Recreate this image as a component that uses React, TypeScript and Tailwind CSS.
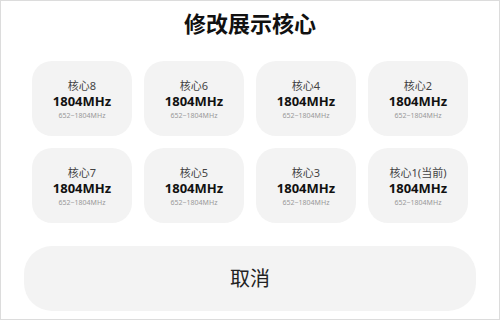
const cores = [
  { name: "核心8" },
  { name: "核心6" },
  { name: "核心4" },
  { name: "核心2" },
  { name: "核心7" },
  { name: "核心5" },
  { name: "核心3" },
  { name: "核心1(当前)" },
];

const font = { fontFamily: '"Noto Sans", "Noto Sans CJK SC", sans-serif' };

const App = () => {
  return (
    <div
      className="w-[500px] h-[320px] bg-white border border-[#dcdcdc] flex flex-col overflow-hidden"
      style={font}
    >
      {/* Title */}
      <h1 className="mt-[9px] text-center text-[22px] leading-[26px] font-bold text-[#111]">
        修改展示核心
      </h1>

      {/* Core grid */}
      <div className="mt-[25px] px-[31px] grid grid-cols-4 gap-x-[12px] gap-y-[12px]">
        {cores.map((core) => (
          <div
            key={core.name}
            className="h-[75px] rounded-[20px] bg-[#f3f3f3] flex flex-col items-center justify-center pt-[2px]"
          >
            <div className="text-[11px] leading-[15px] text-[#444]">{core.name}</div>
            <div className="text-[13px] leading-[16px] font-bold text-[#111]">1804MHz</div>
            <div className="text-[7px] leading-[13px] text-[#999]">652~1804MHz</div>
          </div>
        ))}
      </div>

      {/* Cancel */}
      <button className="mt-[23px] mx-[23px] h-[65px] rounded-[28px] bg-[#f3f3f3] text-[20px] text-[#222]">
        取消
      </button>
    </div>
  );
};

export default App;
